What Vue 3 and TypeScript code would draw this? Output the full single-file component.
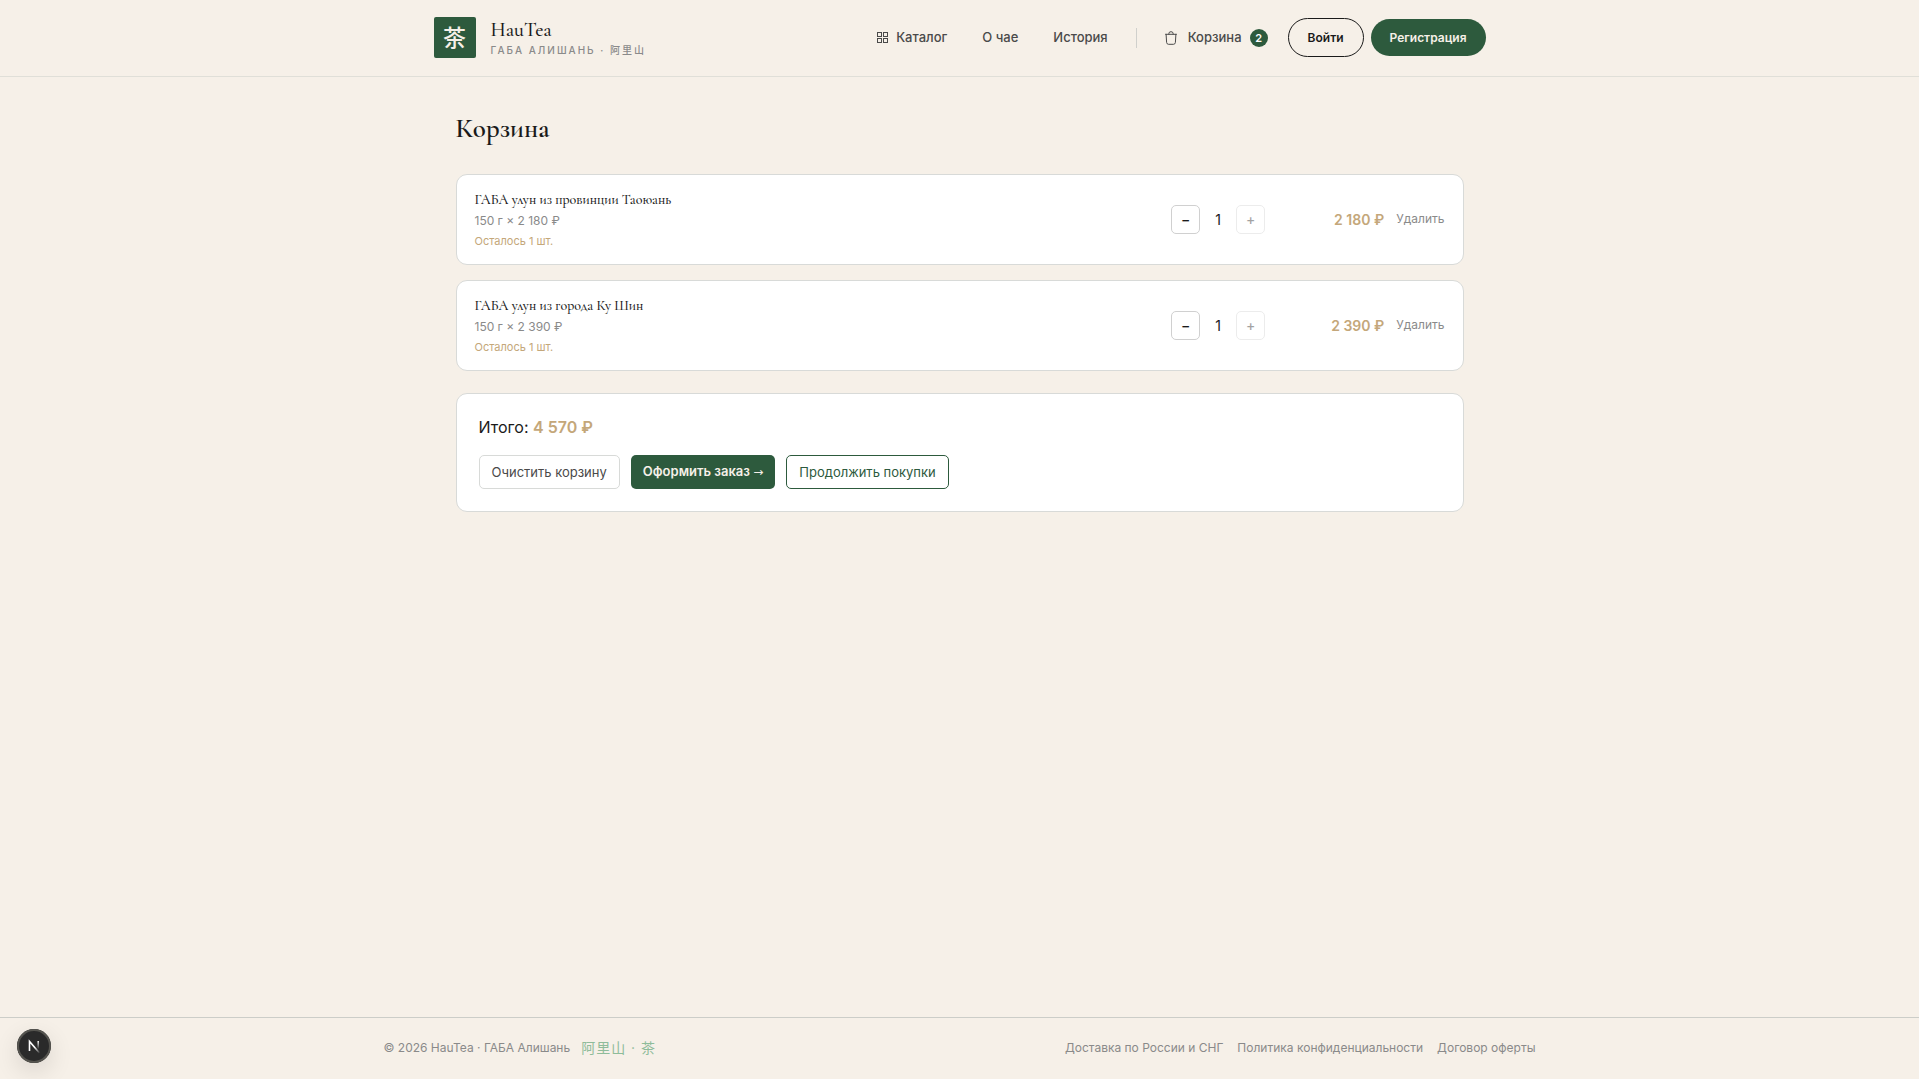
<script setup lang="ts">
import { computed, ref } from 'vue'

interface CartItem {
  id: number
  title: string
  weight: number
  price: number
  qty: number
  stock: number
}

const items = ref<CartItem[]>([
  { id: 1, title: 'ГАБА улун из провинции Таоюань', weight: 150, price: 2180, qty: 1, stock: 1 },
  { id: 2, title: 'ГАБА улун из города Ку Шин', weight: 150, price: 2390, qty: 1, stock: 1 },
])

const count = computed(() => items.value.reduce((n, i) => n + i.qty, 0))
const total = computed(() => items.value.reduce((n, i) => n + i.qty * i.price, 0))

function money(value: number): string {
  return String(value).replace(/\B(?=(\d{3})+$)/g, '\u00a0') + '\u00a0₽'
}

function decrease(item: CartItem): void {
  item.qty -= 1
  if (item.qty < 1) remove(item)
}

function remove(item: CartItem): void {
  items.value = items.value.filter((i) => i.id !== item.id)
}
</script>

<template>
  <div class="page">
    <header class="header">
      <div class="header-inner">
        <a href="#" class="brand">
          <span class="brand-mark">茶</span>
          <span class="brand-text">
            <span class="brand-name">HauTea</span>
            <span class="brand-sub">ГАБА АЛИШАНЬ · 阿里山</span>
          </span>
        </a>
        <nav class="nav">
          <a href="#" class="nav-link">
            <svg class="grid-icon" viewBox="0 0 11 11" fill="none" stroke="currentColor" aria-hidden="true">
              <rect x="0.5" y="0.5" width="4" height="4" />
              <rect x="6.5" y="0.5" width="4" height="4" />
              <rect x="0.5" y="6.5" width="4" height="4" />
              <rect x="6.5" y="6.5" width="4" height="4" />
            </svg>
            Каталог
          </a>
          <a href="#" class="nav-link">О чае</a>
          <a href="#" class="nav-link">История</a>
        </nav>
        <span class="divider"></span>
        <a href="#" class="nav-link cart-link">
          <svg class="bag-icon" viewBox="0 0 12 14" fill="none" stroke="currentColor" stroke-linejoin="round" stroke-linecap="round" aria-hidden="true">
            <path d="M0.600 3.300H11.400" />
            <path d="M1.100 3.300L1.600 11.400Q1.800 13.300 3.500 13.300H8.500Q10.200 13.300 10.400 11.400L10.900 3.300" />
            <path d="M3.900 3.300V2.400Q3.900 0.700 6 0.700T8.100 2.400V3.300" />
          </svg>
          Корзина
          <span class="badge">{{ count }}</span>
        </a>
        <div class="auth">
          <button type="button" class="pill pill-outline">Войти</button>
          <button type="button" class="pill pill-solid">Регистрация</button>
        </div>
      </div>
    </header>

    <main class="main">
      <h1 class="title">Корзина</h1>
      <ul class="items">
        <li v-for="item in items" :key="item.id" class="card item">
          <div class="info">
            <h2 class="item-title">{{ item.title }}</h2>
            <p class="item-meta">{{ item.weight }} г × {{ money(item.price) }}</p>
            <p class="item-stock">Осталось {{ item.stock }} шт.</p>
          </div>
          <div class="stepper">
            <button type="button" class="step" aria-label="Меньше" @click="decrease(item)">−</button>
            <span class="qty">{{ item.qty }}</span>
            <button type="button" class="step" aria-label="Больше" :disabled="item.qty >= item.stock" @click="item.qty++">+</button>
          </div>
          <span class="price">{{ money(item.price * item.qty) }}</span>
          <button type="button" class="remove" @click="remove(item)">Удалить</button>
        </li>
      </ul>

      <section class="card summary">
        <p class="total">Итого: <strong>{{ money(total) }}</strong></p>
        <div class="actions">
          <button type="button" class="btn btn-muted" @click="items = []">Очистить корзину</button>
          <a href="#" class="btn btn-primary">Оформить заказ <span class="arrow">→</span></a>
          <a href="#" class="btn btn-outline">Продолжить покупки</a>
        </div>
      </section>
    </main>

    <footer class="footer">
      <div class="footer-inner">
        <div class="footer-left">
          <span>© 2026 HauTea · ГАБА Алишань</span>
          <span class="footer-cjk">阿里山 · 茶</span>
        </div>
        <nav class="footer-links">
          <a href="#">Доставка по России и СНГ</a>
          <a href="#">Политика конфиденциальности</a>
          <a href="#">Договор оферты</a>
        </nav>
      </div>
    </footer>

    <button type="button" class="dev-badge" aria-label="Инструменты разработчика">
      <svg viewBox="0 0 34 34" fill="none" aria-hidden="true">
        <defs>
          <linearGradient id="n-diagonal" x1="18" y1="18" x2="23" y2="24" gradientUnits="userSpaceOnUse">
            <stop stop-color="#fff" />
            <stop offset="1" stop-color="#fff" stop-opacity="0" />
          </linearGradient>
          <linearGradient id="n-stem" x1="21" y1="12" x2="21" y2="20" gradientUnits="userSpaceOnUse">
            <stop stop-color="#fff" />
            <stop offset="1" stop-color="#fff" stop-opacity="0" />
          </linearGradient>
        </defs>
        <path d="M12.500 22V12.500L22.500 24" stroke="url(#n-diagonal)" stroke-width="1.600" />
        <path d="M21.200 12v8" stroke="url(#n-stem)" stroke-width="1.500" />
      </svg>
    </button>
  </div>
</template>

<style>
body {
  margin: 0;
  background: #f6f0e8;
}
</style>

<style scoped>
.page {
  --green: #2d5a3d;
  --gold: #c4a77a;
  --line: #d8dad8;
  --ink: #1a1a1a;
  --gray: #8a8a8a;
  --serif: 'Cormorant Garamond', 'Liberation Serif', serif;
  display: flex;
  flex-direction: column;
  min-height: 100vh;
  background: #f6f0e8;
  color: var(--ink);
  font-family: Inter, 'Noto Sans CJK SC', sans-serif;
  font-size: 13px;
  line-height: 20px;
}
a {
  color: inherit;
  text-decoration: none;
}
button {
  font-family: inherit;
  cursor: pointer;
}
h1, h2, p, ul {
  margin: 0;
  padding: 0;
  font-weight: 400;
}
.header {
  padding-bottom: 1px;
  border-bottom: 1px solid #e0dfd8;
}
.header-inner {
  display: flex;
  align-items: center;
  max-width: 1052px;
  height: 75px;
  margin: 0 auto;
}
.brand {
  display: flex;
  align-items: center;
  gap: 15px;
  margin-right: auto;
}
.brand-mark {
  display: flex;
  align-items: center;
  justify-content: center;
  width: 42px;
  height: 41px;
  border-radius: 2px;
  background: var(--green);
  color: #f6f0e8;
  font-size: 23px;
  font-weight: 500;
  line-height: 24px;
}
.brand-text {
  display: flex;
  flex-direction: column;
}
.brand-name {
  font-family: var(--serif);
  font-size: 20px;
  font-weight: 500;
  line-height: 24px;
}
.brand-sub {
  color: var(--gray);
  font-size: 10px;
  font-weight: 500;
  line-height: 16px;
  letter-spacing: 2px;
}
.nav {
  display: flex;
  gap: 35px;
}
.nav-link {
  display: flex;
  align-items: center;
  color: #4a4a4a;
  font-weight: 500;
  line-height: 21px;
}
.grid-icon {
  width: 11px;
  height: 11px;
  margin-right: 8px;
}
.divider {
  width: 1px;
  height: 20px;
  margin: 0 28px;
  background: #d0d0cc;
}
.bag-icon {
  width: 12px;
  height: 14px;
  margin-right: 11px;
}
.badge {
  width: 18px;
  margin-left: 8px;
  border-radius: 50%;
  background: var(--green);
  color: #fff;
  font-size: 11px;
  font-weight: 600;
  line-height: 18px;
  text-align: center;
}
.auth {
  display: flex;
  align-items: center;
  gap: 7px;
  margin-left: 20px;
}
.pill {
  padding: 0 19px;
  border: 0;
  border-radius: 20px;
  font-size: 12px;
  font-weight: 600;
  line-height: 37px;
}
.pill-outline {
  border: 1px solid var(--ink);
  background: transparent;
  color: var(--ink);
}
.pill-solid {
  background: var(--green);
  color: #f6f0e8;
}
.main {
  flex: 1;
  box-sizing: border-box;
  width: 100%;
  max-width: 1008px;
  margin: 0 auto;
  padding: 34px 0;
}
.title {
  margin-bottom: 27px;
  font-family: var(--serif);
  font-size: 27px;
  font-weight: 600;
  line-height: 36px;
}
.items {
  display: flex;
  flex-direction: column;
  gap: 15px;
  list-style: none;
}
.card {
  border: 1px solid var(--line);
  border-radius: 11px;
  background: #fff;
}
.item {
  display: flex;
  align-items: center;
  padding: 14px 18px;
}
.info {
  flex: 1;
}
.item-title {
  font-family: var(--serif);
  font-size: 14px;
  font-weight: 500;
  line-height: 21px;
}
.item-meta {
  color: var(--gray);
  font-size: 12px;
  line-height: 22px;
}
.item-stock {
  color: var(--gold);
  font-size: 11px;
  line-height: 18px;
}
.stepper {
  display: flex;
  align-items: center;
}
.step {
  width: 29px;
  height: 29px;
  padding: 0;
  border: 1px solid #d0d0d0;
  border-radius: 5px;
  background: #fff;
  color: var(--ink);
  font-size: 14px;
  font-weight: 500;
}
.step:disabled {
  opacity: 0.4;
}
.qty {
  width: 36px;
  font-size: 14px;
  text-align: center;
}
.price {
  width: 119px;
  color: var(--gold);
  font-size: 14px;
  font-weight: 600;
  text-align: right;
}
.remove {
  margin-left: 12px;
  padding: 0 0 2px;
  border: 0;
  background: none;
  color: var(--gray);
  font-size: 12px;
}
.summary {
  margin-top: 22px;
  padding: 22px;
}
.total {
  margin-bottom: 17px;
  font-size: 16px;
  line-height: 22px;
}
.total strong {
  color: var(--gold);
  font-weight: 600;
}
.actions {
  display: flex;
  gap: 11px;
}
.btn {
  padding: 0 12px;
  border: 1px solid var(--line);
  border-radius: 5px;
  background: #fff;
  color: #4a4a4a;
  font-size: 13px;
  line-height: 32px;
}
.btn-primary {
  border: 0;
  background: var(--green);
  color: #f6f0e8;
  font-weight: 600;
}
.arrow {
  font-family: 'DejaVu Sans', sans-serif;
  font-size: 12px;
  font-weight: 400;
  line-height: 12px;
}
.btn-outline {
  border-color: var(--green);
  color: var(--green);
}
.footer {
  padding-bottom: 1px;
  border-top: 1px solid #cccdc8;
}
.footer-inner {
  display: flex;
  align-items: center;
  justify-content: space-between;
  max-width: 1152px;
  height: 60px;
  margin: 0 auto;
  color: var(--gray);
  font-size: 12px;
}
.footer-left {
  display: flex;
  align-items: center;
  gap: 11px;
}
.footer-cjk {
  color: #8fbc9a;
  font-size: 14px;
  letter-spacing: 1px;
}
.footer-links {
  display: flex;
  gap: 14px;
}
.dev-badge {
  position: fixed;
  bottom: 16px;
  left: 17px;
  width: 34px;
  height: 34px;
  padding: 0;
  border: 0;
  border-radius: 50%;
  background: #2a2a2a;
  box-shadow: inset 0 0 0 2px #55544f, 0 8px 24px rgba(0, 0, 0, 0.12);
}
.dev-badge svg {
  display: block;
  width: 34px;
  height: 34px;
}
</style>
